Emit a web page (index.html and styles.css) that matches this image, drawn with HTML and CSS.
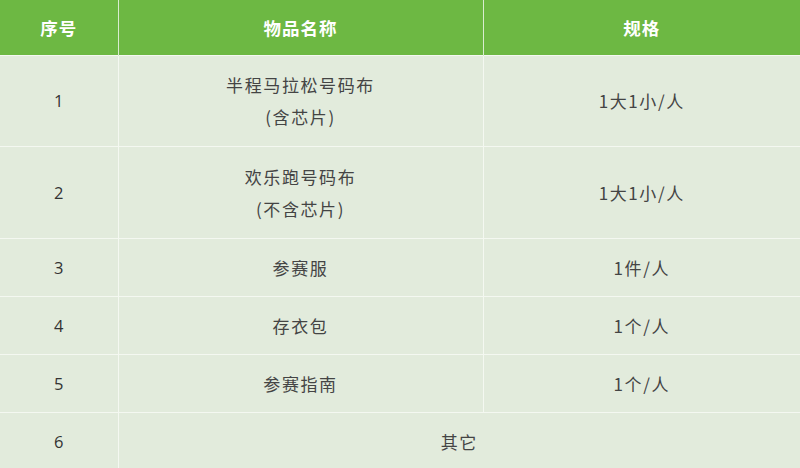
FILE: index.html
```html
<!DOCTYPE html>
<html lang="zh">
<head>
<meta charset="utf-8">
<link rel="stylesheet" href="styles.css">
</head>
<body>
<table class="items">
  <colgroup>
    <col class="c-no">
    <col class="c-name">
    <col class="c-spec">
  </colgroup>
  <thead>
    <tr class="head">
      <th>序号</th>
      <th>物品名称</th>
      <th>规格</th>
    </tr>
  </thead>
  <tbody>
    <tr class="tall">
      <td class="num">1</td>
      <td>半程马拉松号码布<br>(含芯片)</td>
      <td>1大1小/人</td>
    </tr>
    <tr class="tall2">
      <td class="num">2</td>
      <td>欢乐跑号码布<br>(不含芯片)</td>
      <td>1大1小/人</td>
    </tr>
    <tr class="short">
      <td class="num">3</td>
      <td>参赛服</td>
      <td>1件/人</td>
    </tr>
    <tr class="short">
      <td class="num">4</td>
      <td>存衣包</td>
      <td>1个/人</td>
    </tr>
    <tr class="short">
      <td class="num">5</td>
      <td>参赛指南</td>
      <td>1个/人</td>
    </tr>
    <tr class="last">
      <td class="num">6</td>
      <td colspan="2">其它</td>
    </tr>
  </tbody>
</table>
</body>
</html>
```

FILE: styles.css
```css
html, body {
  margin: 0;
  padding: 0;
  background: #e2ebdd;
  overflow: hidden;
}

.items {
  width: 800px;
  border-collapse: collapse;
  table-layout: fixed;
  font-family: "Noto Sans CJK SC", "Noto Sans", sans-serif;
  background: #e2ebdc;
}

.c-no { width: 118px; }
.c-name { width: 365px; }
.c-spec { width: 317px; }

.items th,
.items td {
  padding: 0;
  text-align: center;
  vertical-align: middle;
  border: 1px solid #f4f8f1;
}

.items tr:first-child th { border-top: none; }
.items th:first-child,
.items td:first-child { border-left: none; }
.items th:last-child,
.items td:last-child { border-right: none; }

.head th {
  height: 55px;
  background: #6db843;
  color: #ffffff;
  font-size: 17.5px;
  font-weight: 700;
  letter-spacing: 1px;
  border-color: #d9ecd0;
  border-bottom: none;
}

.items td {
  color: #444444;
  font-size: 17px;
  line-height: 32px;
  letter-spacing: 1.6px;
}

.items td.num {
  font-family: "Open Sans", "Liberation Sans", sans-serif;
  font-size: 16.5px;
  color: #333333;
  letter-spacing: 0;
}

.tall td { height: 90px; }
.tall2 td { height: 91px; }
.short td { height: 57px; }
.last td { height: 57px; border-bottom: none; }
```
